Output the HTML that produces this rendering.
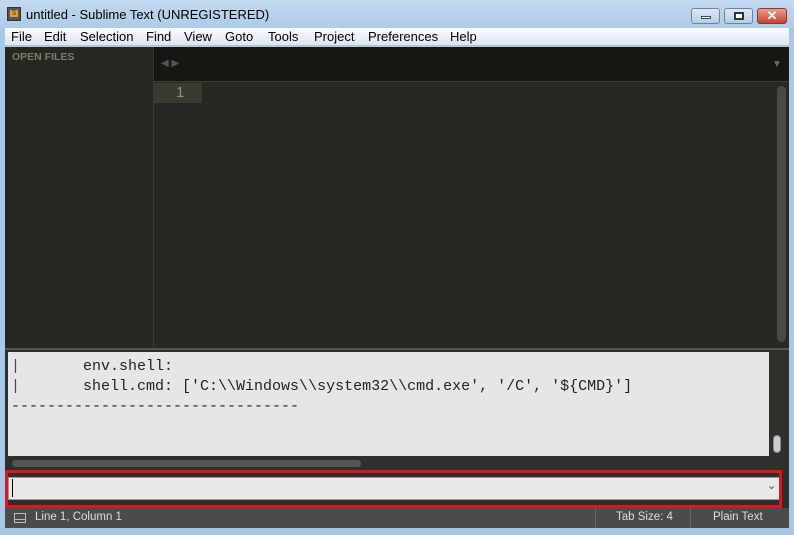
<!DOCTYPE html>
<html><head><style>
*{margin:0;padding:0;box-sizing:border-box}
body{width:794px;height:535px;overflow:hidden;background:#a9c8e6;font-family:"Liberation Sans",sans-serif;position:relative}
.a{position:absolute}
.m{position:absolute;top:29px;font-size:13px;color:#000}
.mono{font-family:"Liberation Mono",monospace;font-size:15px;color:#222;white-space:pre}
</style></head><body>
<div class="a" style="left:0;top:0;width:794px;height:28px;background:linear-gradient(#c3d9ef,#aecbe8)"></div>
<div class="a" style="left:7px;top:7px;width:14px;height:14px;background:#555;border:1px solid #333"><div style="margin:2px;width:8px;height:7px;background:#e8a030;font-size:7px;color:#333;text-align:center;line-height:7px">S</div></div>
<div class="a" style="left:26px;top:7px;font-size:13px;color:#000">untitled - Sublime Text (UNREGISTERED)</div>
<div class="a" style="left:691px;top:8px;width:29px;height:16px;border:1px solid #6d84a0;border-radius:3px;background:linear-gradient(#dfeaf6,#b6cbe2)"><div style="margin:7px auto 0;width:10px;height:3px;background:#fff;border:1px solid #445"></div></div>
<div class="a" style="left:724px;top:8px;width:29px;height:16px;border:1px solid #6d84a0;border-radius:3px;background:linear-gradient(#dfeaf6,#b6cbe2)"><div style="margin:3px auto 0;width:10px;height:8px;border:2px solid #334;background:#fff"></div></div>
<div class="a" style="left:757px;top:8px;width:30px;height:16px;border:1px solid #8a3a30;border-radius:3px;background:linear-gradient(#e8a090,#c8402e);color:#fff;font-size:13px;font-weight:bold;text-align:center;line-height:14px">✕</div>
<div class="a" style="left:5px;top:28px;width:784px;height:18px;background:linear-gradient(#fbfcfe,#dde5f3);border-bottom:1px solid #b8c0cc"></div>
<div class="m" style="left:11px">File</div><div class="m" style="left:44px">Edit</div><div class="m" style="left:80px">Selection</div><div class="m" style="left:146px">Find</div><div class="m" style="left:184px">View</div><div class="m" style="left:225px">Goto</div><div class="m" style="left:268px">Tools</div><div class="m" style="left:314px">Project</div><div class="m" style="left:368px">Preferences</div><div class="m" style="left:450px">Help</div>
<div class="a" style="left:5px;top:47px;width:148px;height:301px;background:#272722"></div>
<div class="a" style="left:12px;top:51px;font-size:10.5px;font-weight:bold;color:#7a7a70">OPEN FILES</div>
<div class="a" style="left:153px;top:47px;width:636px;height:34px;background:#161612;border-left:1px solid #333"></div>
<div class="a" style="left:161px;top:58px;color:#555;font-size:10px">◀ ▶</div>
<div class="a" style="left:772px;top:59px;color:#666;font-size:10px">▼</div>
<div class="a" style="left:153px;top:81px;width:636px;height:267px;background:#272822;border-top:1px solid #3a3a36;border-left:1px solid #3a3a36"></div>
<div class="a" style="left:154px;top:83px;width:48px;height:20px;background:#3a3a33"></div>
<div class="a" style="left:176px;top:84px;font-size:15px;color:#8f8f88">1</div>
<div class="a" style="left:777px;top:86px;width:9px;height:256px;background:#4a4a45;border-radius:5px"></div>
<div class="a" style="left:5px;top:348px;width:784px;height:160px;background:#2f2f2b;border-top:2px solid #555"></div>
<div class="a" style="left:8px;top:352px;width:761px;height:104px;background:#e6e6e6"></div>
<div class="a mono" style="left:11px;top:357px;line-height:20px"><span style="color:#6a2a80">|</span>       env.shell:
<span style="color:#6a2a80">|</span>       shell.cmd: ['C:\\Windows\\system32\\cmd.exe', '/C', '${CMD}']
--------------------------------</div>
<div class="a" style="left:773px;top:435px;width:8px;height:18px;background:#ccc;border-radius:4px;border:1px solid #888"></div>
<div class="a" style="left:12px;top:460px;width:349px;height:7px;background:#555;border-radius:4px"></div>
<div class="a" style="left:8px;top:477px;width:772px;height:23px;background:#e8e8e8;border:1px solid #999"></div>
<div class="a" style="left:12px;top:479px;width:1px;height:18px;background:#000"></div>
<div class="a" style="left:767px;top:479px;font-size:11px;color:#444">⌄</div>
<div class="a" style="left:5px;top:470px;width:777px;height:38px;border:3px solid #e0141e"></div>
<div class="a" style="left:5px;top:508px;width:784px;height:20px;background:#4b4b4b"></div>
<div class="a" style="left:14px;top:513px;width:12px;height:10px;border:1px solid #bbb"><div style="margin-top:5px;height:1px;background:#bbb"></div></div>
<div class="a" style="left:35px;top:511px;font-size:11.5px;color:#ddd">Line 1, Column 1</div>
<div class="a" style="left:595px;top:508px;width:1px;height:20px;background:#666"></div>
<div class="a" style="left:690px;top:508px;width:1px;height:20px;background:#666"></div>
<div class="a" style="left:616px;top:511px;font-size:11.5px;color:#ddd">Tab Size: 4</div>
<div class="a" style="left:713px;top:511px;font-size:11.5px;color:#ddd">Plain Text</div>
</body></html>
